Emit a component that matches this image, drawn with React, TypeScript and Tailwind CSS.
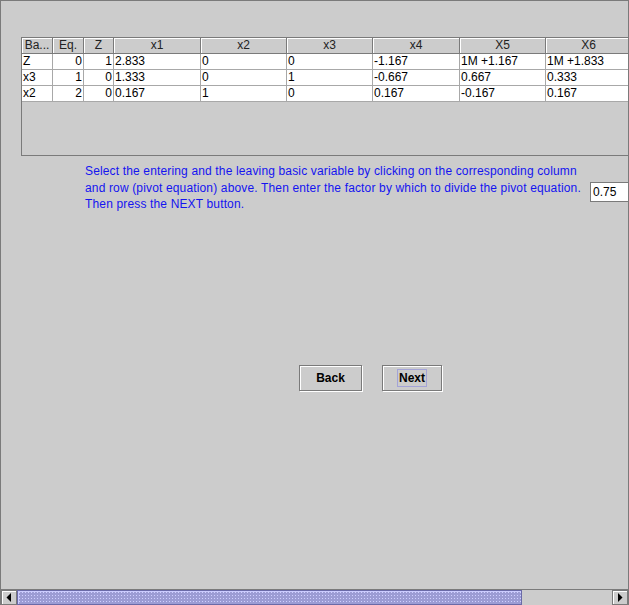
const COLS = ["Ba...", "Eq.", "Z", "x1", "x2", "x3", "x4", "X5", "X6"];

const ROWS: string[][] = [
  ["Z", "0", "1", "2.833", "0", "0", "-1.167", "1M +1.167", "1M +1.833"],
  ["x3", "1", "0", "1.333", "0", "1", "-0.667", "0.667", "0.333"],
  ["x2", "2", "0", "0.167", "1", "0", "0.167", "-0.167", "0.167"],
];

const GRID = "grid grid-cols-[31px_31px_30px_87px_86px_86px_87px_86px_86px]";

function Arrow({ dir }: { dir: "left" | "right" }) {
  return (
    <div className="flex h-full w-[16px] items-center justify-center border border-[#7a7a7a] bg-[#cccccc] shadow-[inset_1px_1px_0_#ffffff]">
      <svg width="6" height="9" viewBox="0 0 6 9">
        {dir === "left" ? <path d="M5 0 L5 9 L0.5 4.5 Z" fill="#000" /> : <path d="M1 0 L1 9 L5.5 4.5 Z" fill="#000" />}
      </svg>
    </div>
  );
}

export default function App() {
  return (
    <div className="relative flex h-[605px] w-[629px] flex-col overflow-hidden border-l border-r border-t border-[#7a7a7a] bg-[#cccccc] font-['Liberation_Sans',Arial,sans-serif] text-[12px] text-black">
      {/* table in its scroll pane */}
      <div className="ml-[20px] mt-[36px] h-[119px] w-[640px] border-l border-t border-b border-[#7a7a7a]">
        <div className={GRID}>
          {COLS.map((c) => (
            <div
              key={c}
              className="h-[16px] border-b border-r border-[#7a7a7a] text-center leading-[15px] text-[#222] shadow-[inset_1px_1px_0_#ffffff]"
            >
              {c}
            </div>
          ))}
        </div>
        {ROWS.map((r, i) => (
          <div key={i} className={GRID}>
            {r.map((v, j) => (
              <div
                key={j}
                className={`h-[16px] border-b border-r border-[#a8a8a8] bg-white px-[1px] leading-[15px] ${
                  j === 1 || j === 2 ? "text-right" : "text-left"
                }`}
              >
                {v}
              </div>
            ))}
          </div>
        ))}
      </div>

      {/* instructions + factor field */}
      <div className="mt-[7px] flex">
        <p className="ml-[84px] w-[497px] shrink-0 text-[12px] leading-[16.5px] tracking-[0.15px] text-[#1414f0]">
          Select the entering and the leaving basic variable by clicking on the corresponding column and row (pivot
          equation) above. Then enter the factor by which to divide the pivot equation. Then press the NEXT button.
        </p>
        <div className="ml-[8px] mt-[19px] h-[20px] w-[60px] shrink-0 border border-[#7a7a7a] bg-white pl-[2px] leading-[18px] shadow-[inset_-1px_-1px_0_#ffffff]">
          0.75
        </div>
      </div>

      {/* buttons */}
      <div className="ml-[298px] mt-[152px] flex gap-[20px]">
        <button className="h-[26px] w-[63px] border border-[#7a7a7a] text-[12px] font-bold shadow-[1px_1px_0_#ffffff,inset_1px_1px_0_#ffffff]">
          Back
        </button>
        <button className="flex h-[26px] w-[60px] items-center justify-center border border-[#7a7a7a] text-[12px] font-bold shadow-[1px_1px_0_#ffffff,inset_1px_1px_0_#ffffff]">
          <span className="border border-[#a3a3d7] px-[1px] leading-[16px]">Next</span>
        </button>
      </div>

      {/* horizontal scrollbar */}
      <div className="mt-auto flex h-[16px] border-t border-[#7a7a7a]">
        <Arrow dir="left" />
        <div className="h-full w-[505px] border border-[#6a6aa8] bg-[#9c9cd4] bg-[radial-gradient(#d0d0ff_0.7px,transparent_0.8px)] bg-[length:3px_3px] shadow-[inset_1px_1px_0_#ccccff]" />
        <div className="h-full flex-1 bg-[#cccccc]" />
        <Arrow dir="right" />
      </div>
    </div>
  );
}
